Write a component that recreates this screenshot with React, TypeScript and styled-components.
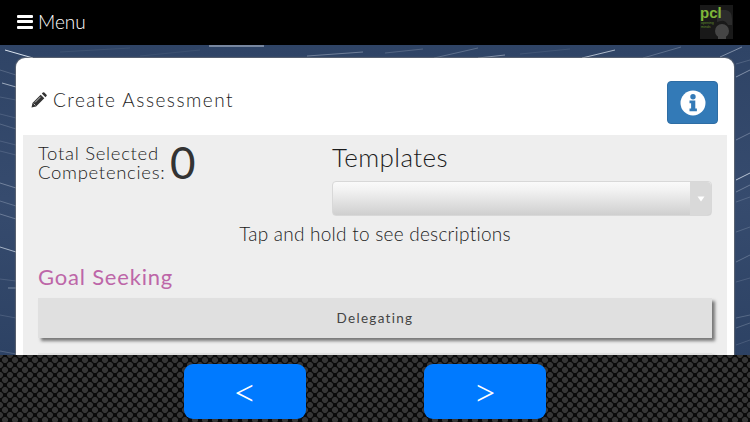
import { type FC } from "react";
import styled, { createGlobalStyle } from "styled-components";

// x1, y1, x2, y2, opacity of the star trails behind the card
const streaks = [
  [5, 50, 33, 58, 0.95], [0, 70, 16, 75, 0.2], [2, 83, 16, 87, 0.6], [0, 97, 16, 100, 0.15],
  [0, 114, 16, 118, 0.15], [0, 124, 16, 129, 0.2], [0, 141, 16, 145, 0.15], [0, 151, 16, 155, 0.15],
  [0, 183, 16, 188, 0.35], [0, 201, 16, 206, 0.25], [0, 214, 16, 219, 0.3], [0, 247, 16, 252, 0.65],
  [0, 279, 16, 281, 0.15], [8, 288, 16, 288, 0.4], [0, 315, 16, 318, 0.15], [0, 351, 16, 354, 0.2],
  [209, 46, 264, 46, 0.8], [307, 56, 363, 52, 0.35], [385, 53, 423, 49, 0.2], [434, 58, 478, 48, 0.25],
  [478, 58, 505, 55, 0.45], [582, 58, 615, 50, 0.7], [643, 58, 681, 47, 0.25], [720, 57, 742, 47, 0.45],
  [60, 52, 130, 48, 0.08], [140, 56, 200, 50, 0.07], [520, 54, 570, 49, 0.1],
  [736, 77, 750, 70, 0.45], [736, 64, 750, 60, 0.18], [736, 140, 750, 133, 0.3], [736, 180, 750, 173, 0.75],
  [736, 192, 750, 185, 0.3], [736, 202, 750, 197, 0.18], [736, 232, 750, 227, 0.18], [736, 262, 750, 255, 0.25],
  [736, 282, 750, 278, 0.15], [736, 318, 750, 315, 0.22], [736, 328, 750, 323, 0.22], [736, 345, 750, 340, 0.15],
];

const App: FC = () => (
  <Page>
    <GlobalStyle />
    <TopBar>
      <MenuButton>
        <Burger>
          <i />
          <i />
          <i />
        </Burger>
        Menu
      </MenuButton>
      <svg width="33" height="34" viewBox="0 0 33 34">
        <rect width="33" height="34" fill="#191919" />
        <path d="M17 5h9q6 1 6 9v6h-4q-3-5-7-4l-4 1z" fill="#2c2c2c" />
        <circle cx="22" cy="26" r="7" fill="#454545" />
        <rect x="18" y="30" width="8" height="4" fill="#454545" />
        <text x="0" y="13" fontFamily="Liberation Sans, sans-serif" fontSize="15" fontWeight="700" fill="#7fb539">
          pcl
        </text>
        <text x="1" y="18.5" fontFamily="Liberation Sans, sans-serif" fontSize="3.6" fill="#5f8a2c">
          opening
        </text>
        <text x="1" y="22.5" fontFamily="Liberation Sans, sans-serif" fontSize="3.6" fill="#5f8a2c">
          minds
        </text>
      </svg>
    </TopBar>
    <Main>
      <Sky viewBox="0 45 750 310" preserveAspectRatio="none">
        {streaks.map(([x1, y1, x2, y2, o], i) => (
          <line key={i} x1={x1} y1={y1} x2={x2} y2={y2} stroke="#e4ecf7" strokeWidth="1" strokeOpacity={o} />
        ))}
      </Sky>
      <Card>
        <CardHead>
          <Title>
            <svg width="16" height="16" viewBox="0 0 16 16">
              <path
                d="M0.5 15.5l1-4.6 8.2-8.2 3.6 3.6-8.2 8.2zM10.8 1.6l1.1-1.1q.7-.6 1.4 0l2.2 2.2q.6.7 0 1.4l-1.1 1.1z"
                fill="#333"
              />
              <path d="M2.6 11.6l1.8 1.8M4 10.4l5.6-5.6" stroke="#fff" strokeWidth="0.7" />
            </svg>
            Create Assessment
          </Title>
          <InfoButton>
            <svg width="26" height="26" viewBox="0 0 26 26">
              <circle cx="13" cy="13" r="12.5" fill="#fff" />
              <circle cx="13" cy="6.8" r="2.7" fill="#337ab7" />
              <path d="M9.5 10.6h5.8v8h1.6v2.6H9.5v-2.6h1.6v-5.4H9.5z" fill="#337ab7" />
            </svg>
          </InfoButton>
        </CardHead>
        <Panel>
          <TopRow>
            <TotalBox>
              <TotalLabel>
                Total Selected
                <br />
                Competencies:
              </TotalLabel>
              <TotalCount>0</TotalCount>
            </TotalBox>
            <TemplatesBox>
              <TemplatesTitle>Templates</TemplatesTitle>
              <SelectBox>
                <SelectArrow>
                  <svg width="8" height="6" viewBox="0 0 8 6">
                    <path d="M0.5 0.5h7L4 5.5z" fill="#fff" />
                  </svg>
                </SelectArrow>
              </SelectBox>
            </TemplatesBox>
          </TopRow>
          <Hint>Tap and hold to see descriptions</Hint>
          <SectionTitle>Goal Seeking</SectionTitle>
          <Competency>Delegating</Competency>
          <Competency />
        </Panel>
      </Card>
    </Main>
    <Footer>
      <NavButton>&lt;</NavButton>
      <NavButton>&gt;</NavButton>
    </Footer>
  </Page>
);

export default App;

const GlobalStyle = createGlobalStyle`
  html, body {
    margin: 0;
    padding: 0;
    background: #000;
  }
  * {
    box-sizing: border-box;
  }
`;

const Page = styled.div`
  display: flex;
  flex-direction: column;
  width: 750px;
  height: 422px;
  overflow: hidden;
  font-family: Lato, "Open Sans", sans-serif;
  font-weight: 300;
  color: #1c1c1c;
`;

const TopBar = styled.header`
  display: flex;
  flex: 0 0 45px;
  align-items: center;
  justify-content: space-between;
  padding: 0 17px 2px 17px;
  background: #000;
`;

const MenuButton = styled.div`
  display: flex;
  align-items: center;
  gap: 5px;
  color: #fff;
  font-size: 19px;
`;

const Burger = styled.span`
  display: flex;
  flex-direction: column;
  gap: 2.5px;
  width: 16px;

  i {
    display: block;
    height: 3px;
    border-radius: 1px;
    background: #fff;
  }
`;

const Main = styled.main`
  position: relative;
  display: flex;
  flex: 1;
  min-height: 0;
  padding: 13px 16px 0;
  overflow: hidden;
  background: linear-gradient(180deg, #2f4466 0%, #364b6e 50%, #2d4264 100%);
`;

const Sky = styled.svg`
  position: absolute;
  inset: 0;
  width: 100%;
  height: 100%;
`;

const Card = styled.section`
  position: relative;
  display: flex;
  flex: 1;
  flex-direction: column;
  padding: 0 7px;
  border-radius: 9px 9px 0 0;
  background: #fff;
  box-shadow: 0 0 1px 1px rgba(120, 120, 120, 0.6);
`;

const CardHead = styled.div`
  display: flex;
  flex: 0 0 77px;
  align-items: flex-start;
  justify-content: space-between;
  padding: 23px 9px 0 9px;
`;

const Title = styled.h2`
  display: flex;
  align-items: center;
  gap: 6px;
  margin: 9px 0 0 -1px;
  font-size: 19px;
  font-weight: 300;
  letter-spacing: 1.5px;
  line-height: 20px;
`;

const InfoButton = styled.button`
  display: flex;
  align-items: center;
  justify-content: center;
  width: 51px;
  height: 43px;
  padding: 0;
  border: 1px solid #2e6da4;
  border-radius: 4px;
  background: #337ab7;
`;

const Panel = styled.div`
  flex: 1;
  min-height: 0;
  padding: 0 15px;
  overflow: hidden;
  background: #eee;
`;

const TopRow = styled.div`
  display: flex;
  height: 81px;
`;

const TotalBox = styled.div`
  display: flex;
  flex: 0 0 294px;
  align-items: flex-start;
  padding-top: 9px;
`;

const TotalLabel = styled.div`
  width: 132px;
  font-size: 18.5px;
  letter-spacing: 0.7px;
  line-height: 19px;
  white-space: nowrap;
`;

const TotalCount = styled.div`
  color: #333;
  font-size: 44px;
  font-weight: 400;
  line-height: 36px;
`;

const TemplatesBox = styled.div`
  display: flex;
  flex: 1;
  flex-direction: column;
  padding-top: 7px;
`;

const TemplatesTitle = styled.div`
  font-size: 26px;
  letter-spacing: 0.4px;
  line-height: 30px;
  margin-bottom: 9px;
`;

const SelectBox = styled.div`
  display: flex;
  justify-content: flex-end;
  height: 35px;
  border: 1px solid #d8d8d8;
  border-radius: 4px;
  background: linear-gradient(180deg, #fafafa 0%, #f2f2f2 25%, #cfcfcf 100%);
`;

const SelectArrow = styled.span`
  display: flex;
  align-items: center;
  justify-content: center;
  width: 21px;
  background: #d9d9d9;
  border-radius: 0 4px 4px 0;
`;

const Hint = styled.div`
  margin-top: 6px;
  font-size: 19px;
  letter-spacing: 0.25px;
  line-height: 24px;
  text-align: center;
`;

const SectionTitle = styled.h3`
  margin: 17px 0 7px;
  color: #bd66a8;
  font-size: 22px;
  font-weight: 400;
  letter-spacing: 0.8px;
  line-height: 28px;
`;

const Competency = styled.div`
  display: flex;
  align-items: center;
  justify-content: center;
  height: 40px;
  margin-bottom: 15px;
  background: #e0e0e0;
  box-shadow: 3px 3px 3px #777;
  font-size: 13.5px;
  font-weight: 400;
  letter-spacing: 1.3px;
  color: #444;
`;

const Footer = styled.footer`
  display: flex;
  flex: 0 0 67px;
  justify-content: center;
  gap: 118px;
  padding: 9px 20px 0 0;
  background-color: #0a0a0a;
  background-image:
    radial-gradient(circle, #363636 2.6px, transparent 3.3px),
    radial-gradient(circle, #363636 2.6px, transparent 3.3px);
  background-size: 10px 10px;
  background-position: 0 0, 5px 5px;
`;

const NavButton = styled.button`
  width: 122px;
  height: 55px;
  padding: 0 0 2px;
  border: 0;
  border-radius: 9px;
  background: #007aff;
  color: #fff;
  font-family: Lato, sans-serif;
  font-size: 42px;
  font-weight: 300;
  line-height: 1;
`;
